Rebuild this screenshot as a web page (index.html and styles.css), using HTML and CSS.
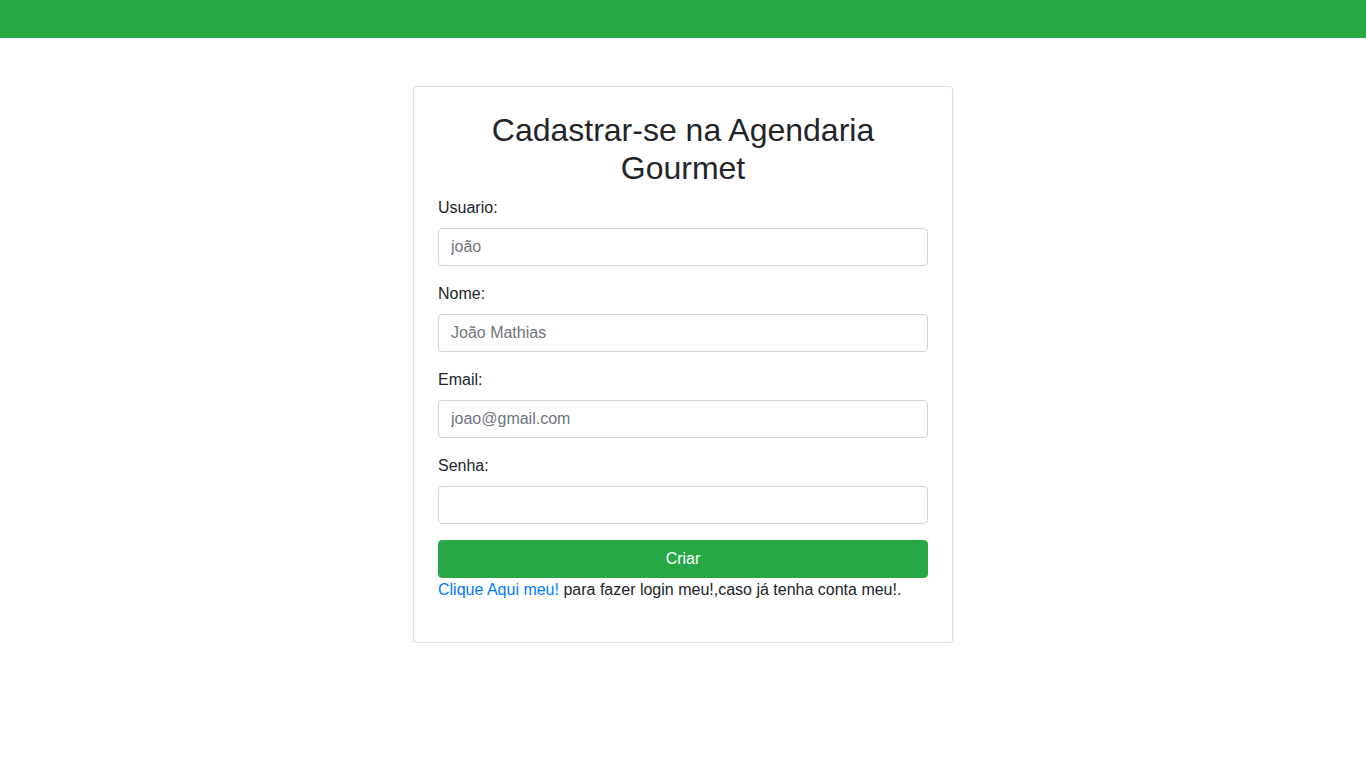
FILE: index.html
```html
<!DOCTYPE html>
<html lang="pt">
<head>
<meta charset="utf-8">
<title>Cadastrar-se</title>
<link rel="stylesheet" href="styles.css">
</head>
<body>
<div class="topbar"></div>
<main class="page">
  <div class="card">
    <h2 class="title">Cadastrar-se na Agendaria Gourmet</h2>
    <form class="form">
      <div class="group">
        <label class="label">Usuario:</label>
        <input class="input" type="text" placeholder="joão">
      </div>
      <div class="group">
        <label class="label">Nome:</label>
        <input class="input" type="text" placeholder="João Mathias">
      </div>
      <div class="group">
        <label class="label">Email:</label>
        <input class="input" type="email" placeholder="joao@gmail.com">
      </div>
      <div class="group">
        <label class="label">Senha:</label>
        <input class="input" type="password">
      </div>
      <button class="btn" type="button">Criar</button>
      <p class="note"><a class="link" href="#">Clique Aqui meu!</a> para fazer login meu!,caso já tenha conta meu!.</p>
    </form>
  </div>
</main>
</body>
</html>
```

FILE: styles.css
```css
* { box-sizing: border-box; }
html, body { margin: 0; padding: 0; }
body {
  font-family: "Liberation Sans", Arial, sans-serif;
  font-size: 16px;
  line-height: 1.5;
  color: #212529;
  background: #fff;
}
.topbar {
  height: 38px;
  background: #28a745;
}
.page {
  display: flex;
  justify-content: center;
  padding-top: 48px;
}
.card {
  width: 540px;
  border: 1px solid rgba(0,0,0,.125);
  border-radius: 4px;
  box-shadow: 0 2px 4px rgba(0,0,0,.075);
  padding: 24px;
  background: #fff;
}
.title {
  margin: 0 0 8px;
  font-size: 32px;
  font-weight: 500;
  line-height: 1.2;
  text-align: center;
}
.form { margin: 0; }
.group { margin-bottom: 16px; }
.label {
  display: block;
  margin-bottom: 8px;
}
.input {
  display: block;
  width: 100%;
  height: 38px;
  padding: 6px 12px;
  font-family: inherit;
  font-size: 16px;
  line-height: 1.5;
  color: #495057;
  border: 1px solid #ced4da;
  border-radius: 4px;
  background: #fff;
}
.input::placeholder { color: #6c757d; opacity: 1; }
.btn {
  display: block;
  width: 100%;
  height: 38px;
  padding: 6px 12px;
  font-family: inherit;
  font-size: 16px;
  line-height: 1.5;
  color: #fff;
  background: #28a745;
  border: 1px solid #28a745;
  border-radius: 4px;
}
.note {
  margin: 0 0 16px;
}
.link {
  color: #007bff;
  text-decoration: none;
}
```
